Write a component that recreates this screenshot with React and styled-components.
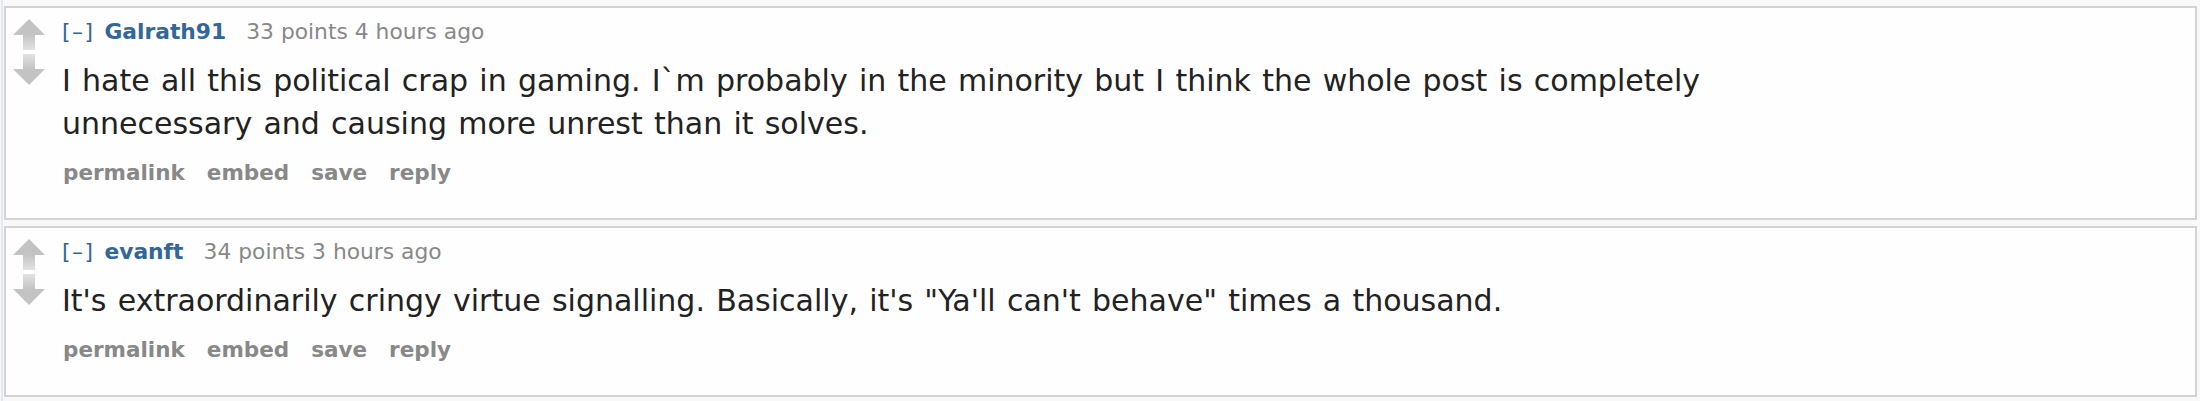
import React from 'react';
import styled, { createGlobalStyle } from 'styled-components';

const GlobalStyle = createGlobalStyle`
    html, body {
        margin: 0;
        padding: 0;
        background-color: #f8f8f8;
    }
    body {
        font-family: "DejaVu Sans", Verdana, sans-serif;
    }
`;

const Page = styled.div`
    margin-left: 1px;
    border-left: 2px solid #e3e8ee;
    padding: 6px 3px 6px 1px;

    display: flex;
    flex-direction: column;
    gap: 6px;
`;

const Comment = styled.div`
    border: 2px solid #d3d3d3;
    background-color: #fefefe;

    display: flex;
    align-items: flex-start;
`;

const Votes = styled.div`
    width: 32px;
    margin: 11px 17px 0 7px;

    display: flex;
    flex-direction: column;
    gap: 4px;
`;

const Entry = styled.div`
    flex: 1;
    padding: 9px 0 30px;
`;

const Tagline = styled.p`
    margin: 0;
    font-size: 21.8px;
    line-height: 30px;
    color: #888;
`;

const Expand = styled.a`
    color: #369;
    letter-spacing: 1.5px;
    margin-right: 10px;
`;

const Author = styled.a`
    color: #369;
    font-weight: bold;
    margin-right: 20px;
`;

const Body = styled.div`
    margin-top: 12px;
    max-width: 1760px;
    font-size: 30px;
    line-height: 43px;
    color: #222;
    word-spacing: 1.7px;
`;

const Buttons = styled.ul`
    list-style: none;
    margin: 13px 0 0;
    padding: 0 0 0 1px;

    display: flex;
    gap: 22px;
`;

const Button = styled.li`
    font-size: 21.5px;
    line-height: 30px;
    font-weight: bold;
    color: #888;
`;

const Arrow = ({ down }) => (
    <svg width="32" height="31" viewBox="0 0 32 31" style={down ? { transform: 'scaleY(-1)' } : undefined}>
        <defs>
            <linearGradient id={down ? 'fadeDown' : 'fadeUp'} x1="0" y1="0" x2="0" y2="1">
                <stop offset="0.5" stopColor="#c3c3c3" />
                <stop offset="1" stopColor="#e2e2e2" />
            </linearGradient>
        </defs>
        <polygon
            points="16,0 32,16 22,16 22,31 10,31 10,16 0,16"
            fill={`url(#${down ? 'fadeDown' : 'fadeUp'})`}
        />
    </svg>
);

const comments = [
    {
        author: 'Galrath91',
        points: 33,
        time: '4 hours ago',
        text: 'I hate all this political crap in gaming. I`m probably in the minority but I think the whole post is completely unnecessary and causing more unrest than it solves.',
    },
    {
        author: 'evanft',
        points: 34,
        time: '3 hours ago',
        text: 'It\'s extraordinarily cringy virtue signalling. Basically, it\'s "Ya\'ll can\'t behave" times a thousand.',
    },
];

const App = () => {
    return (
        <>
            <GlobalStyle />
            <Page>
                {comments.map(c => (
                    <Comment key={c.author}>
                        <Votes>
                            <Arrow />
                            <Arrow down />
                        </Votes>
                        <Entry>
                            <Tagline>
                                <Expand>[–]</Expand>
                                <Author>{c.author}</Author>
                                {c.points} points {c.time}
                            </Tagline>
                            <Body>{c.text}</Body>
                            <Buttons>
                                <Button>permalink</Button>
                                <Button>embed</Button>
                                <Button>save</Button>
                                <Button>reply</Button>
                            </Buttons>
                        </Entry>
                    </Comment>
                ))}
            </Page>
        </>
    );
};

export default App;
